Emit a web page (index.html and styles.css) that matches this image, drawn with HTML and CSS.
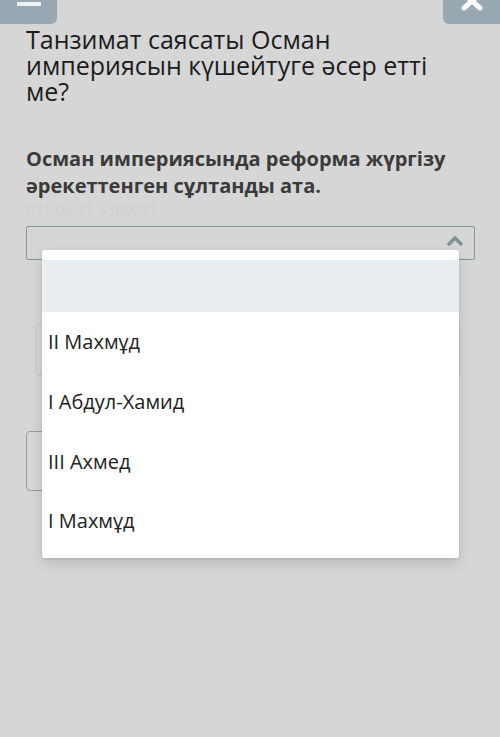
FILE: index.html
```html
<!DOCTYPE html>
<html lang="kk">
<head>
    <meta charset="UTF-8">
    <meta name="viewport" content="width=device-width, initial-scale=1.0">
    <title>Тест</title>
    <link rel="stylesheet" href="styles.css">
</head>
<body>
    <div class="app">
        <div class="topbar">
            <button class="tab tab-left"><span class="minus"></span></button>
            <button class="tab tab-right">
                <svg width="26" height="14" viewBox="0 0 26 14">
                    <path d="M5 -6 L21 8 M21 -6 L5 8" stroke="#fff" stroke-width="5" stroke-linecap="round"/>
                </svg>
            </button>
        </div>

        <div class="content">
            <h1 class="title">Танзимат саясаты Осман империясын күшейтуге әсер етті ме?</h1>

            <p class="question">Осман империясында реформа жүргізу әрекеттенген сұлтанды ата.</p>
            <div class="meta">021.06.21 5360071</div>

            <div class="select-wrap">
                <div class="select">
                    <svg class="chevron" width="18" height="12" viewBox="0 0 18 12">
                        <path d="M2 10 L9 3 L16 10" fill="none" stroke="#7d9292" stroke-width="3.5"/>
                    </svg>
                </div>

                <ul class="menu">
                    <li class="active"></li>
                    <li>II Махмұд</li>
                    <li>I Абдул-Хамид</li>
                    <li>III Ахмед</li>
                    <li>I Махмұд</li>
                </ul>
            </div>

            <div class="answer-box"></div>
            <button class="check-btn"></button>
        </div>
    </div>
</body>
</html>
```

FILE: styles.css
```css
* {
    margin: 0;
    padding: 0;
    box-sizing: border-box;
}
html, body {
    height: 100%;
    width: 100%;
    font-family: "Open Sans", "Noto Sans", sans-serif;
}
.app {
    min-height: 100vh;
    background-color: #d6d6d6;
    overflow: hidden;
}
.topbar {
    display: flex;
    justify-content: space-between;
    height: 24px;
}
.tab {
    width: 57px;
    height: 24px;
    border: none;
    background-color: #98a8b3;
    display: flex;
    justify-content: center;
    align-items: flex-start;
}
.tab-left {
    border-bottom-right-radius: 6px;
}
.tab-right {
    border-bottom-left-radius: 6px;
}
.minus {
    display: block;
    width: 24px;
    height: 4px;
    margin-top: 2px;
    background-color: #eef1f3;
}
.content {
    padding: 2px 25px 0 26px;
}
.title {
    font-size: 25px;
    font-weight: 400;
    line-height: 26px;
    color: #1c1c1c;
    padding-right: 20px;
}
.question {
    margin-top: 41px;
    font-size: 20px;
    font-weight: 700;
    line-height: 27px;
    color: #3b3b3b;
}
.meta {
    font-size: 15px;
    line-height: 20px;
    color: #cfcfcf;
}
.select-wrap {
    position: relative;
    margin-top: 7px;
}
.select {
    height: 34px;
    border: 1px solid #7f9a9a;
    border-radius: 2px;
    position: relative;
}
.chevron {
    position: absolute;
    right: 10px;
    top: 8px;
}
.menu {
    position: absolute;
    top: 24px;
    left: 16px;
    width: 417px;
    list-style: none;
    background-color: #fff;
    padding: 10px 0 7px;
    border-radius: 2px;
    box-shadow: 0 6px 14px rgba(0, 0, 0, 0.12), 0 1px 3px rgba(0, 0, 0, 0.1);
    z-index: 2;
}
.menu li {
    height: 59.7px;
    display: flex;
    align-items: center;
    padding-left: 6px;
    font-size: 20px;
    color: #222;
}
.menu li.active {
    height: 52px;
    background-color: #e8eef1;
}
.answer-box {
    margin: 64px 15px 0 10px;
    height: 52px;
    border: 1px solid #c4c4c4;
    border-radius: 3px;
}
.check-btn {
    display: block;
    margin-top: 55px;
    width: 120px;
    height: 60px;
    border: 1px solid #9a9a9a;
    border-radius: 4px;
    background: transparent;
}
```
